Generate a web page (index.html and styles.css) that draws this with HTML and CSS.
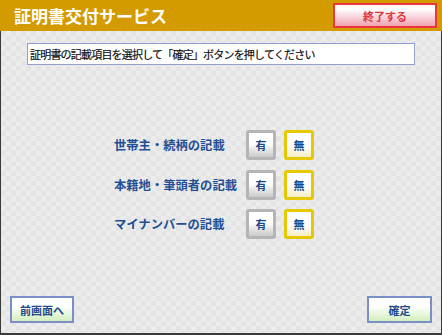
FILE: index.html
```html
<!DOCTYPE html>
<html lang="ja">
<head>
    <meta charset="UTF-8">
    <meta name="viewport" content="width=device-width, initial-scale=1.0">
    <title>証明書交付サービス</title>
    <link rel="stylesheet" href="styles.css">
</head>
<body>
    <div class="screen">
        <div class="header">
            <div class="title">証明書交付サービス</div>
            <button class="end-btn">終了する</button>
        </div>
        <div class="content">
            <div class="guide">証明書の記載項目を選択して「確定」ボタンを押してください</div>
            <div class="options">
                <div class="label">世帯主・続柄の記載</div>
                <button class="choice">有</button>
                <button class="choice selected">無</button>

                <div class="label">本籍地・筆頭者の記載</div>
                <button class="choice">有</button>
                <button class="choice selected">無</button>

                <div class="label">マイナンバーの記載</div>
                <button class="choice">有</button>
                <button class="choice selected">無</button>
            </div>
            <div class="footer">
                <button class="nav-btn">前画面へ</button>
                <button class="nav-btn">確定</button>
            </div>
        </div>
    </div>
</body>
</html>
```

FILE: styles.css
```css
html, body {
    margin: 0;
    padding: 0;
    overflow: hidden;
}
body {
    font-family: "Noto Sans CJK JP", "Noto Sans", sans-serif;
    background: #e8e8e8;
}
.screen {
    width: 442px;
    height: 335px;
    display: flex;
    flex-direction: column;
}
.header {
    height: 31px;
    flex-shrink: 0;
    background: #d49b00;
    display: flex;
    justify-content: space-between;
    align-items: center;
    padding: 0 5px 0 14px;
}
.title {
    color: #fff;
    font-size: 17px;
    font-weight: bold;
    line-height: 1;
    margin-top: -1px;
}
.end-btn {
    width: 104px;
    height: 25px;
    border: 2px solid #e8383d;
    background: linear-gradient(to bottom, #ffffff 20%, #f0a2b0);
    color: #e0343c;
    font-family: inherit;
    font-size: 11px;
    font-weight: bold;
    padding: 0;
}
.content {
    flex: 1;
    display: flex;
    flex-direction: column;
    border: 1px solid #3a3a3a;
    border-top: none;
    border-bottom-width: 2px;
    background: repeating-conic-gradient(#ececec 0 25%, #e4e4e4 0 50%) 0 0 / 10px 10px;
}
.guide {
    margin: 12px 0 0 26px;
    width: 388px;
    height: 22px;
    box-sizing: border-box;
    border: 1px solid #8fa0cf;
    background: #fff;
    display: flex;
    align-items: center;
    padding-left: 2px;
    font-size: 11px;
    letter-spacing: -0.8px;
    color: #111;
    -webkit-text-stroke: 0.2px #111;
}
.options {
    display: grid;
    grid-template-columns: 124px 30px 30px;
    grid-auto-rows: 30px;
    column-gap: 8px;
    row-gap: 9.5px;
    margin: 65px 0 0 113px;
    align-items: center;
}
.label {
    font-size: 12.3px;
    font-weight: bold;
    color: #1f4f95;
    white-space: nowrap;
}
.choice {
    width: 30px;
    height: 30px;
    box-sizing: border-box;
    border: 3px solid #b5b5b5;
    border-radius: 3px;
    background: linear-gradient(to bottom, #ffffff 45%, #c9c9c9);
    color: #1d4a8a;
    font-family: inherit;
    font-size: 11px;
    font-weight: bold;
    padding: 0;
}
.choice.selected {
    border-color: #e6c800;
    background: linear-gradient(to bottom, #ffffff 55%, #f5eec2);
}
.footer {
    margin-top: auto;
    display: flex;
    justify-content: space-between;
    padding: 0 9px 10px 9px;
}
.nav-btn {
    width: 64px;
    height: 27px;
    box-sizing: border-box;
    border: 2px solid #7b8ec6;
    background: linear-gradient(to bottom, #ffffff 35%, #d3efbd);
    color: #1d4a8a;
    font-family: inherit;
    font-size: 11px;
    font-weight: bold;
    padding: 0;
}
.nav-btn:last-child {
    width: 65px;
}
```
